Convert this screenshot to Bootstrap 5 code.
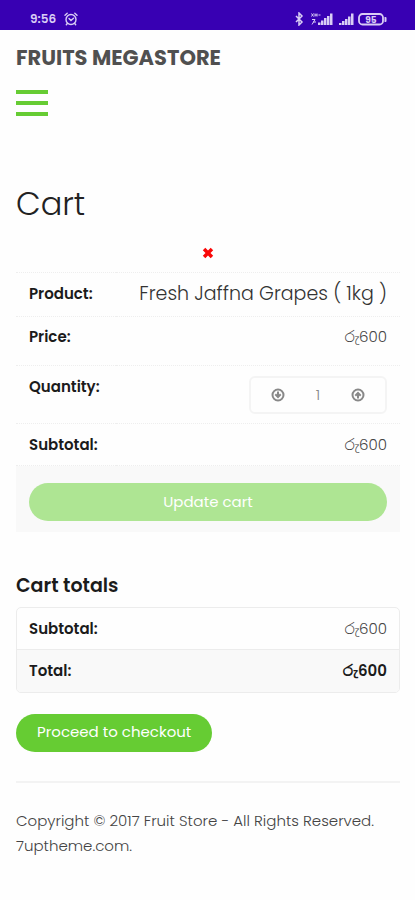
<!DOCTYPE html>
<html lang="en">
<head>
<meta charset="utf-8">
<meta name="viewport" content="width=device-width, initial-scale=1">
<title>Cart - Fruits Megastore</title>
<link href="https://cdn.jsdelivr.net/npm/bootstrap@5.3.0/dist/css/bootstrap.min.css" rel="stylesheet">
<style>
body{font-family:Poppins,Inter,"Noto Sans Sinhala","Noto Sans",sans-serif;font-size:15px;font-weight:300;line-height:25px;color:#444;background:#fefefe}
.status-bar{height:30px;background:#3800b3;color:#d9cdf5;padding:8px 28px 0 30px;font-size:12px;font-weight:600;line-height:22px}
.page{padding:0 15px 40px 16px}
.brand{font-size:21px;font-weight:700;line-height:28px;color:#505050;margin-top:14px}
.menu-btn{width:32px;margin-top:18px;height:26px}
.menu-btn span{height:4px;background:#66cc33}
.page-title{font-size:32px;font-weight:300;line-height:40px;color:#222;margin:68px 0 0}
.remove-row{height:48px;padding-top:10px}
.cart-table th,.cart-table td{padding:0 13px;vertical-align:middle;border-top:1px dotted #eee}
.cart-table td{text-align:right}
.cart-table .row-product th,.cart-table .row-product td{height:44px;padding-bottom:2px}
.row-price{height:49px}
.row-qty{height:58px}
.row-sub{height:42px}
.cart-table .row-price th,.cart-table .row-price td{vertical-align:top;padding-top:7px}
.cart-table .row-qty th{vertical-align:top;padding-top:8px}
.cart-table .row-update td{background:#f9f9f9;height:66px;padding-top:6px}
.product-link{font-size:19px;color:#333;white-space:nowrap}
.stepper{width:138px;height:38px;border:2px solid #f4f4f4;border-radius:6px;padding:0 20px}
.stepper input{width:40px;color:#888;font-weight:300}
.btn-pill{height:38px;border-radius:19px;color:#fff;font-size:15px;line-height:24px;padding:6px 21px}
.btn-update{background:#aee593}
.btn-checkout{background:#66cc33;margin-top:21px}
.totals-title{font-size:19px;font-weight:600;line-height:26px;color:#1b1b1b;margin:41px 0 8px}
.totals-box{border:1px solid #ececec;border-radius:5px;overflow:hidden}
.totals-box th,.totals-box td{height:42px;padding:0 12px}
.cart-table th,.totals-box th{color:#1b1b1b;font-weight:600;font-size:15px}
.totals-box td{text-align:right}
.totals-box .grand th,.totals-box .grand td{background:#f9f9f9;border-top:1px solid #ececec;color:#1b1b1b;font-weight:600}
.site-foot{border-top:2px solid #f3f3f3;margin-top:29px;padding-top:25px}
</style>
<script src="https://cdn.jsdelivr.net/npm/bootstrap@5.3.0/dist/js/bootstrap.bundle.min.js"></script>
</head>
<body>
<div class="status-bar d-flex justify-content-between align-items-start">
  <div class="d-flex align-items-center gap-2">
    <span>9:56</span>
    <svg width="14" height="14" viewBox="0 0 14 14" fill="none" stroke="currentColor" stroke-width="1.4" stroke-linecap="round"><circle cx="7" cy="7.5" r="5"/><path d="M1 3.2 3.2 1.2M13 3.2l-2.2-2M3.300 11.5l-1 1.300M10.700 11.5l1 1.300M5 6.5l2 2 2.5-2.300"/></svg>
  </div>
  <svg class="mt-1" width="94" height="14" viewBox="0 0 94 14" fill="none" stroke="currentColor">
    <path stroke-width="1.5" d="M3 4l6 6-3 3V1l3 3-6 6"/>
    <g fill="currentColor" stroke="none"><path d="M25 10.500h2.500v2.500h-2.500zM28 8.500h2.500v4.500h-2.500zM31 6h2.500v7h-2.500zM34 4h2.500v9h-2.500zM37 1.500h2.500v11.500h-2.500zM46 11h2.500v2h-2.500zM49 9h2.500v4h-2.500zM52 7h2.500v6h-2.500zM55 4.500h2.500v8.500h-2.500zM58 1.500h2.500v11.500h-2.500z"/><path d="M91.500 5h1a1 1 0 0 1 1 1v3a1 1 0 0 1-1 1h-1z"/></g>
    <path stroke-width="1" d="M18.500 1.500l2 3M20.500 1.500l-2 3M22 1.500v3M24 1.500v3M22 3h2M25.500 3h2M19 7.500h3l-3 5M20 10h3"/>
    <rect x="66" y="2" width="24" height="10.500" rx="3.500" stroke-width="1.800"/>
    <text x="78" y="10.500" text-anchor="middle" font-size="9" font-weight="700" fill="currentColor" stroke="none">95</text>
  </svg>
</div>

<div class="page">
  <header>
    <div class="brand">FRUITS MEGASTORE</div>
    <button type="button" class="menu-btn btn p-0 border-0 rounded-0 d-flex flex-column justify-content-between" aria-label="Menu"><span class="w-100"></span><span class="w-100"></span><span class="w-100"></span></button>
  </header>

  <main>
    <h1 class="page-title">Cart</h1>
    <div class="remove-row d-flex justify-content-center align-items-center">
      <button type="button" class="btn p-0 border-0 d-flex" aria-label="Remove item"><svg width="12" height="12" viewBox="0 0 12 12" fill="#f90808"><path d="M3.300.8 6 3.500 8.700.8l2.500 2.500L8.500 6l2.700 2.700-2.500 2.500L6 8.500l-2.700 2.700L.8 8.700 3.500 6 .8 3.300z"/></svg></button>
    </div>
    <table class="cart-table w-100">
      <tbody>
        <tr class="row-product"><th scope="row">Product:</th><td><a href="#" class="product-link text-decoration-none">Fresh Jaffna Grapes ( 1kg )</a></td></tr>
        <tr class="row-price"><th scope="row">Price:</th><td>රු600</td></tr>
        <tr class="row-qty"><th scope="row"><label for="qty">Quantity:</label></th><td>
          <div class="stepper ms-auto d-flex align-items-center justify-content-between">
            <button type="button" class="btn p-0 border-0 d-flex" aria-label="Decrease"><svg width="14" height="14" viewBox="0 0 14 14" fill="none" stroke="#888" stroke-width="2"><circle cx="7" cy="7" r="5.500"/><path d="M7 3.500v4.500M4.300 6.300 7 9l2.700-2.700"/></svg></button>
            <input id="qty" type="text" value="1" class="border-0 bg-transparent text-center p-0">
            <button type="button" class="btn p-0 border-0 d-flex" aria-label="Increase"><svg width="14" height="14" viewBox="0 0 14 14" fill="none" stroke="#888" stroke-width="2"><circle cx="7" cy="7" r="5.500"/><path d="M7 10.500V6M4.300 7.700 7 5l2.700 2.700"/></svg></button>
          </div></td></tr>
        <tr class="row-sub"><th scope="row">Subtotal:</th><td>රු600</td></tr>
        <tr class="row-update"><td colspan="2"><button type="button" class="btn btn-pill btn-update border-0 w-100">Update cart</button></td></tr>
      </tbody>
    </table>

    <h2 class="totals-title">Cart totals</h2>
    <div class="totals-box">
      <table class="w-100">
        <tbody>
          <tr><th scope="row">Subtotal:</th><td>රු600</td></tr>
          <tr class="grand"><th scope="row">Total:</th><td>රු600</td></tr>
        </tbody>
      </table>
    </div>
    <a href="#" class="btn btn-pill btn-checkout border-0">Proceed to checkout</a>
  </main>

  <footer class="site-foot">Copyright © 2017 Fruit Store - All Rights Reserved.<br>7uptheme.com.</footer>
</div>
</body>
</html>
